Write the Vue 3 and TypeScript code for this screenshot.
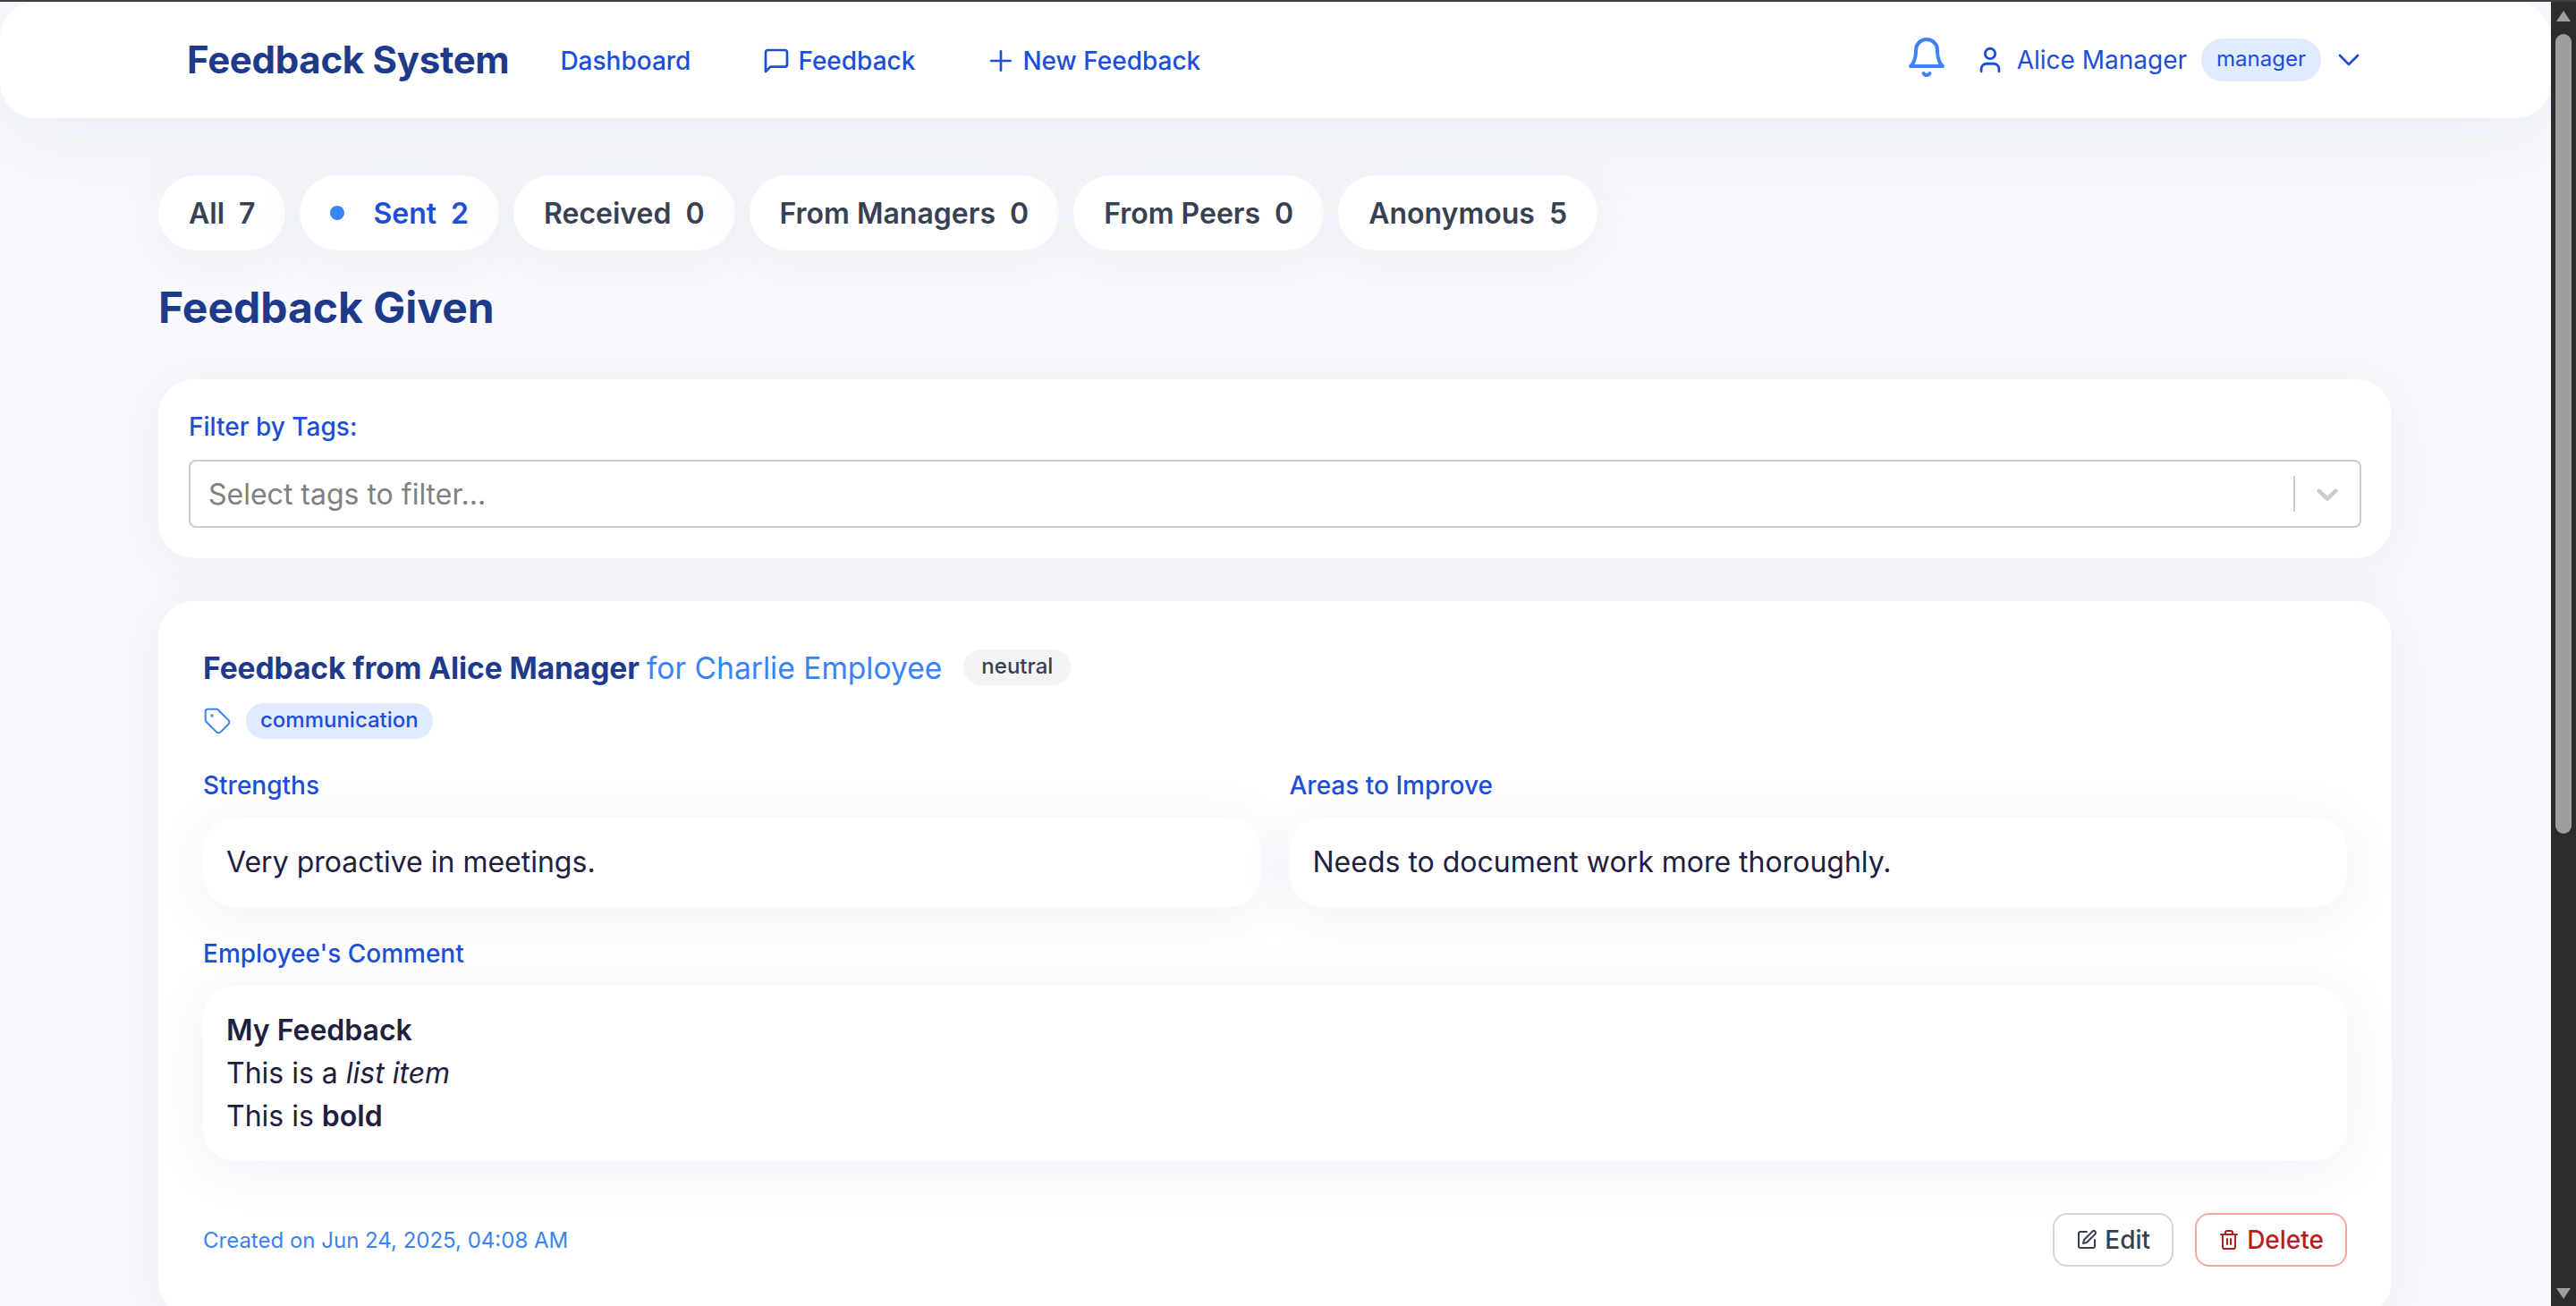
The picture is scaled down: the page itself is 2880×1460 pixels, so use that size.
<script setup lang="ts">
interface Pill {
  label: string;
  count: number;
  active?: boolean;
}

const pills: Pill[] = [
  { label: 'All', count: 7 },
  { label: 'Sent', count: 2, active: true },
  { label: 'Received', count: 0 },
  { label: 'From Managers', count: 0 },
  { label: 'From Peers', count: 0 },
  { label: 'Anonymous', count: 5 }
];
</script>

<template>
  <div class="shell">
    <div class="page">
      <header class="navbar">
        <div class="brand">Feedback System</div>
        <nav class="links">
          <a class="link">Dashboard</a>
          <a class="link">
            <svg class="ico" viewBox="0 0 24 24"><path d="M21 15a2 2 0 0 1-2 2H7l-4 4V5a2 2 0 0 1 2-2h14a2 2 0 0 1 2 2z" /></svg>
            Feedback
          </a>
          <a class="link">
            <svg class="ico" viewBox="0 0 24 24"><path d="M12 4v16M4 12h16" /></svg>
            New Feedback
          </a>
        </nav>
        <div class="nav-right">
          <svg class="bell" viewBox="0 0 24 24"><path d="M6 8a6 6 0 0 1 12 0c0 7 3 9 3 9H3s3-2 3-9" /><path d="M10.3 21a1.94 1.94 0 0 0 3.4 0" /></svg>
          <svg class="ico user" viewBox="0 0 24 24"><path d="M19 21v-2a4 4 0 0 0-4-4H9a4 4 0 0 0-4 4v2" /><circle cx="12" cy="7" r="4" /></svg>
          <span class="user-name">Alice Manager</span>
          <span class="role">manager</span>
          <svg class="caret" viewBox="0 0 24 24"><path d="m6 9 6 6 6-6" /></svg>
        </div>
      </header>

      <main class="content">
        <div class="pills">
          <button v-for="p in pills" :key="p.label" class="pill" :class="{ active: p.active }">
            <span v-if="p.active" class="dot"></span>
            <span>{{ p.label }}</span>
            <span>{{ p.count }}</span>
          </button>
        </div>

        <h1 class="title">Feedback Given</h1>

        <section class="card filter">
          <label class="filter-label">Filter by Tags:</label>
          <div class="select">
            <span class="placeholder">Select tags to filter...</span>
            <span class="sep"></span>
            <svg class="select-caret" viewBox="0 0 20 20"><path d="M4.516 7.548c.436-.446 1.043-.481 1.576 0L10 11.295l3.908-3.747c.533-.481 1.141-.446 1.574 0 .436.445.408 1.197 0 1.615-.406.418-4.695 4.502-4.695 4.502a1.095 1.095 0 0 1-1.576 0S4.924 9.581 4.516 9.163s-.436-1.17 0-1.615z" /></svg>
          </div>
        </section>

        <section class="card feedback">
          <div class="head">
            <h2 class="head-title">Feedback from Alice Manager</h2>
            <span class="head-for">for Charlie Employee</span>
            <span class="neutral">neutral</span>
          </div>
          <div class="tags">
            <svg class="tag-ico" viewBox="0 0 24 24"><path d="M12.6 2.6A2 2 0 0 0 11.2 2H4a2 2 0 0 0-2 2v7.2a2 2 0 0 0 .6 1.4l8.7 8.7a2.4 2.4 0 0 0 3.4 0l6.6-6.6a2.4 2.4 0 0 0 0-3.4z" /><circle cx="7.5" cy="7.5" r=".5" /></svg>
            <span class="tag">communication</span>
          </div>

          <div class="cols">
            <div>
              <div class="sub">Strengths</div>
              <div class="box">Very proactive in meetings.</div>
            </div>
            <div>
              <div class="sub">Areas to Improve</div>
              <div class="box">Needs to document work more thoroughly.</div>
            </div>
          </div>

          <div class="sub comment-label">Employee's Comment</div>
          <div class="box comment">
            <div><strong>My Feedback</strong></div>
            <div>This is a <em>list item</em></div>
            <div>This is <strong>bold</strong></div>
          </div>

          <div class="foot">
            <span class="created">Created on Jun 24, 2025, 04:08 AM</span>
            <div class="actions">
              <button class="btn">
                <svg class="btn-ico" viewBox="0 0 24 24"><path d="M12 3H5a2 2 0 0 0-2 2v14a2 2 0 0 0 2 2h14a2 2 0 0 0 2-2v-7" /><path d="M18.4 2.6a2.1 2.1 0 1 1 3 3L12 15l-4 1 1-4z" /></svg>
                Edit
              </button>
              <button class="btn danger">
                <svg class="btn-ico" viewBox="0 0 24 24"><path d="M3 6h18M19 6v14a2 2 0 0 1-2 2H7a2 2 0 0 1-2-2V6M8 6V4a2 2 0 0 1 2-2h4a2 2 0 0 1 2 2v2M10 11v6M14 11v6" /></svg>
                Delete
              </button>
            </div>
          </div>
        </section>
      </main>
    </div>

    <div class="scrollbar">
      <span class="arrow up"></span>
      <span class="thumb"></span>
      <span class="arrow down"></span>
    </div>
  </div>
</template>

<style>
html,
body {
  margin: 0;
  height: 100%;
  overflow: hidden;
}
</style>

<style scoped>
.shell {
  display: flex;
  height: 1460px;
  border-top: 2px solid #3f3f3f;
  box-sizing: border-box;
  font-family: Inter, "Liberation Sans", sans-serif;
  color: #1f2040;
  overflow: hidden;
}

.page {
  flex: 1;
  min-width: 0;
  background: #f9fafd;
  overflow: hidden;
}

.navbar {
  display: flex;
  align-items: center;
  height: 130px;
  padding: 0 206px 0 209px;
  box-sizing: border-box;
  background: #fff;
  border-radius: 40px;
  box-shadow: 0 16px 96px rgba(30, 58, 138, 0.08);
}

.brand {
  font-size: 42px;
  font-weight: 700;
  letter-spacing: -0.3px;
  color: #1e3a8a;
  margin: -2px 57px 0 0;
}

.links {
  display: flex;
  gap: 80px;
  margin-top: 2px;
}

.link {
  display: flex;
  align-items: center;
  gap: 8px;
  font-size: 28px;
  font-weight: 500;
  color: #1d4ed8;
}

.ico {
  width: 32px;
  height: 32px;
  fill: none;
  stroke: currentColor;
  stroke-width: 2;
  stroke-linecap: round;
  stroke-linejoin: round;
}

.nav-right {
  margin-left: auto;
  display: flex;
  align-items: center;
  color: #1d4ed8;
}

.bell {
  width: 48px;
  height: 48px;
  fill: none;
  stroke: #3b82f6;
  stroke-width: 2;
  stroke-linecap: round;
  stroke-linejoin: round;
  margin-right: 30px;
  margin-top: -6px;
}

.user {
  width: 34px;
  height: 34px;
  margin-right: 13px;
}

.user-name {
  font-size: 28px;
}

.role {
  margin-left: 16px;
  padding: 0 17px;
  height: 48px;
  line-height: 46px;
  border-radius: 24px;
  background: #e0ebff;
  font-size: 24px;
}

.caret {
  width: 40px;
  height: 40px;
  margin-left: 11px;
  fill: none;
  stroke: currentColor;
  stroke-width: 1.6;
  stroke-linecap: round;
  stroke-linejoin: round;
}

.content {
  padding: 64px 178px 0 177px;
}

.pills {
  display: flex;
  gap: 16px;
}

.pill {
  display: flex;
  align-items: center;
  gap: 16px;
  height: 84px;
  padding: 0 34px;
  border: 0;
  border-radius: 42px;
  background: #fff;
  font: 600 32px Inter, "Liberation Sans", sans-serif;
  color: #374151;
  box-shadow: 0 8px 64px rgba(30, 58, 138, 0.07);
}

.pill.active {
  color: #1d4ed8;
}

.dot {
  width: 16px;
  height: 16px;
  border-radius: 50%;
  background: #3b82f6;
  margin-right: 16px;
}

.title {
  margin: 28px 0 0;
  font-size: 48px;
  line-height: 72px;
  font-weight: 700;
  color: #1e3a8a;
}

.card {
  background: #fff;
  border-radius: 40px;
  box-shadow: 0 8px 64px rgba(30, 58, 138, 0.07);
}

.filter {
  margin-top: 44px;
  height: 200px;
  padding: 34px;
  box-sizing: border-box;
}

.filter-label {
  display: block;
  font-size: 28px;
  line-height: 38px;
  font-weight: 500;
  color: #1d4ed8;
}

.select {
  display: flex;
  align-items: center;
  height: 76px;
  margin-top: 18px;
  padding: 0 16px 0 20px;
  border: 2px solid #ccc;
  border-radius: 8px;
  box-sizing: border-box;
}

.placeholder {
  flex: 1;
  font-size: 32px;
  color: #808080;
}

.sep {
  width: 2px;
  height: 40px;
  background: #ccc;
  margin-right: 16px;
}

.select-caret {
  width: 40px;
  height: 40px;
  fill: #ccc;
}

.feedback {
  margin-top: 48px;
  padding: 50px 50px 40px;
  height: 800px;
  box-sizing: border-box;
}

.head {
  display: flex;
  align-items: center;
  height: 48px;
}

.head-title {
  margin: 0;
  font-size: 33.6px;
  font-weight: 700;
  letter-spacing: -0.1px;
  color: #1e3a8a;
}

.head-for {
  margin-left: 8px;
  font-size: 33.6px;
  color: #3b82f6;
}

.neutral {
  margin-left: 24px;
  padding: 0 20px;
  height: 40px;
  line-height: 38px;
  border-radius: 20px;
  background: #f3f4f6;
  font-size: 24px;
  font-weight: 500;
  color: #374151;
}

.tags {
  display: flex;
  align-items: center;
  gap: 16px;
  margin-top: 16px;
}

.tag-ico {
  width: 32px;
  height: 32px;
  fill: none;
  stroke: #3b82f6;
  stroke-width: 1.5;
  stroke-linecap: round;
  stroke-linejoin: round;
}

.tag {
  padding: 0 16px;
  height: 40px;
  line-height: 38px;
  border-radius: 20px;
  background: #e0ebff;
  font-size: 24px;
  font-weight: 500;
  color: #1d4ed8;
}

.cols {
  display: grid;
  grid-template-columns: 1fr 1fr;
  gap: 32px;
  margin-top: 32px;
}

.sub {
  font-size: 28px;
  line-height: 40px;
  font-weight: 500;
  color: #1d4ed8;
}

.box {
  margin-top: 16px;
  padding: 26px;
  border-radius: 36px;
  background: #fff;
  font-size: 32px;
  line-height: 48px;
  color: #1f2040;
  box-shadow: 0 8px 64px rgba(30, 58, 138, 0.07);
}

.comment-label {
  margin-top: 32px;
}

.comment strong {
  font-weight: 600;
}

.foot {
  display: flex;
  align-items: center;
  justify-content: space-between;
  margin-top: 58px;
}

.created {
  font-size: 24px;
  color: #3b82f6;
}

.actions {
  display: flex;
  gap: 24px;
}

.btn {
  display: flex;
  align-items: center;
  gap: 8px;
  height: 60px;
  padding: 0 24px;
  border: 2px solid #d1d5db;
  border-radius: 16px;
  background: #fff;
  font: 500 28px Inter, "Liberation Sans", sans-serif;
  color: #374151;
}

.btn.danger {
  border-color: #fca5a5;
  color: #b91c1c;
}

.btn-ico {
  width: 24px;
  height: 24px;
  fill: none;
  stroke: currentColor;
  stroke-width: 2;
  stroke-linecap: round;
  stroke-linejoin: round;
}

.scrollbar {
  position: relative;
  width: 28px;
  background: #2c2c2c;
  display: flex;
  flex-direction: column;
  align-items: center;
}

.thumb {
  width: 18px;
  height: 894px;
  margin-top: 14px;
  border-radius: 9px;
  background: #9e9e9e;
}

.arrow {
  width: 0;
  height: 0;
  border-left: 8px solid transparent;
  border-right: 8px solid transparent;
}

.arrow.up {
  margin-top: 10px;
  border-bottom: 12px solid #9e9e9e;
}

.arrow.down {
  margin-top: auto;
  margin-bottom: 8px;
  border-top: 12px solid #9e9e9e;
}
</style>
